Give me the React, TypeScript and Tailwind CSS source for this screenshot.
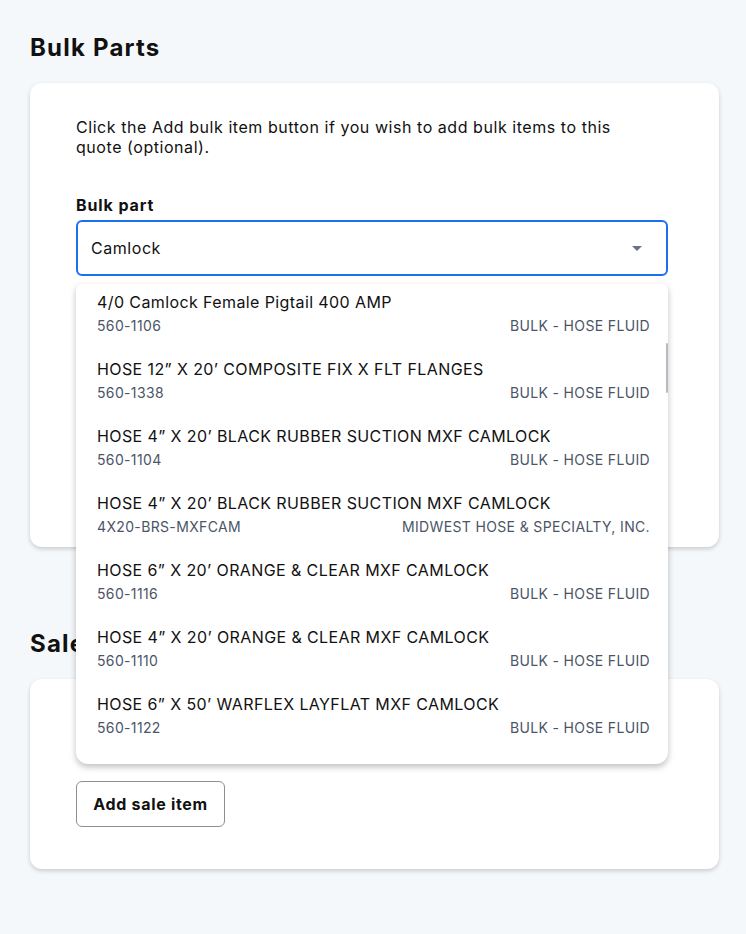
const parts = [
  { name: "4/0 Camlock Female Pigtail 400 AMP", sku: "560-1106", group: "BULK - HOSE FLUID" },
  { name: "HOSE 12” X 20’ COMPOSITE FIX X FLT FLANGES", sku: "560-1338", group: "BULK - HOSE FLUID" },
  { name: "HOSE 4” X 20’ BLACK RUBBER SUCTION MXF CAMLOCK", sku: "560-1104", group: "BULK - HOSE FLUID" },
  { name: "HOSE 4” X 20’ BLACK RUBBER SUCTION MXF CAMLOCK", sku: "4X20-BRS-MXFCAM", group: "MIDWEST HOSE & SPECIALTY, INC." },
  { name: "HOSE 6” X 20’ ORANGE & CLEAR MXF CAMLOCK", sku: "560-1116", group: "BULK - HOSE FLUID" },
  { name: "HOSE 4” X 20’ ORANGE & CLEAR MXF CAMLOCK", sku: "560-1110", group: "BULK - HOSE FLUID" },
  { name: "HOSE 6” X 50’ WARFLEX LAYFLAT MXF CAMLOCK", sku: "560-1122", group: "BULK - HOSE FLUID" },
];

const PartOption = ({ name, sku, group }: { name: string; sku: string; group: string }) => (
  <div className="h-[67px] pt-[8px] pl-[21px] pr-[18px]">
    <div className="text-[16px] leading-[20px] tracking-[0.4px] text-[#111]">{name}</div>
    <div className="mt-[4px] flex justify-between text-[14px] leading-[20px] tracking-[0.35px] text-[#4b5567]">
      <span>{sku}</span>
      <span>{group}</span>
    </div>
  </div>
);

export default function App() {
  return (
    <div className="min-h-[934px] bg-[#f5f8fb] pl-[30px] pr-[27px] pt-[34px] pb-[60px] text-[#111] font-['Inter',sans-serif]">
      <h2 className="text-[24px] leading-[28px] font-bold tracking-[1.2px]">Bulk Parts</h2>

      <section className="mt-[21px] h-[464px] rounded-xl bg-white pl-[46px] pr-[51px] pt-[34px] shadow-[0_2px_4px_rgba(0,0,0,0.18)]">
        <p className="pr-[40px] text-[16px] leading-[20px] tracking-[0.55px]">
          Click the Add bulk item button if you wish to add bulk items to this quote (optional).
        </p>

        <label className="mt-[38px] block text-[16px] leading-[20px] font-bold tracking-[0.9px]">Bulk part</label>

        <div className="relative mt-[5px]">
          <div className="flex h-[56px] items-center justify-between rounded-md border-2 border-[#1d6ff2] pl-[13px] pr-[24px]">
            <span className="text-[16px] tracking-[0.55px]">Camlock</span>
            <svg width="10" height="5" viewBox="0 0 10 5" className="text-[#6b7280]">
              <path d="M0 0h10L5 5z" fill="currentColor" />
            </svg>
          </div>

          <div className="absolute left-0 right-0 top-[64px] z-10 rounded-t-md rounded-b-xl bg-white pb-[11px] shadow-[0_3px_6px_rgba(0,0,0,0.25)]">
            {parts.map((p) => (
              <PartOption key={p.sku} {...p} />
            ))}
            <div className="absolute right-0 top-[59px] h-[50px] w-[2px] rounded bg-[#b8bcc2]" />
          </div>
        </div>
      </section>

      <h2 className="mt-[83px] text-[24px] leading-[28px] font-bold tracking-[1.2px]">Sale Items</h2>

      <section className="mt-[21px] h-[190px] rounded-xl bg-white pl-[46px] pt-[102px] shadow-[0_2px_4px_rgba(0,0,0,0.18)]">
        <button className="h-[46px] w-[149px] rounded-md border border-[#8a8f96] text-[16px] font-bold tracking-[0.7px] text-[#111]">
          Add sale item
        </button>
      </section>
    </div>
  );
}
